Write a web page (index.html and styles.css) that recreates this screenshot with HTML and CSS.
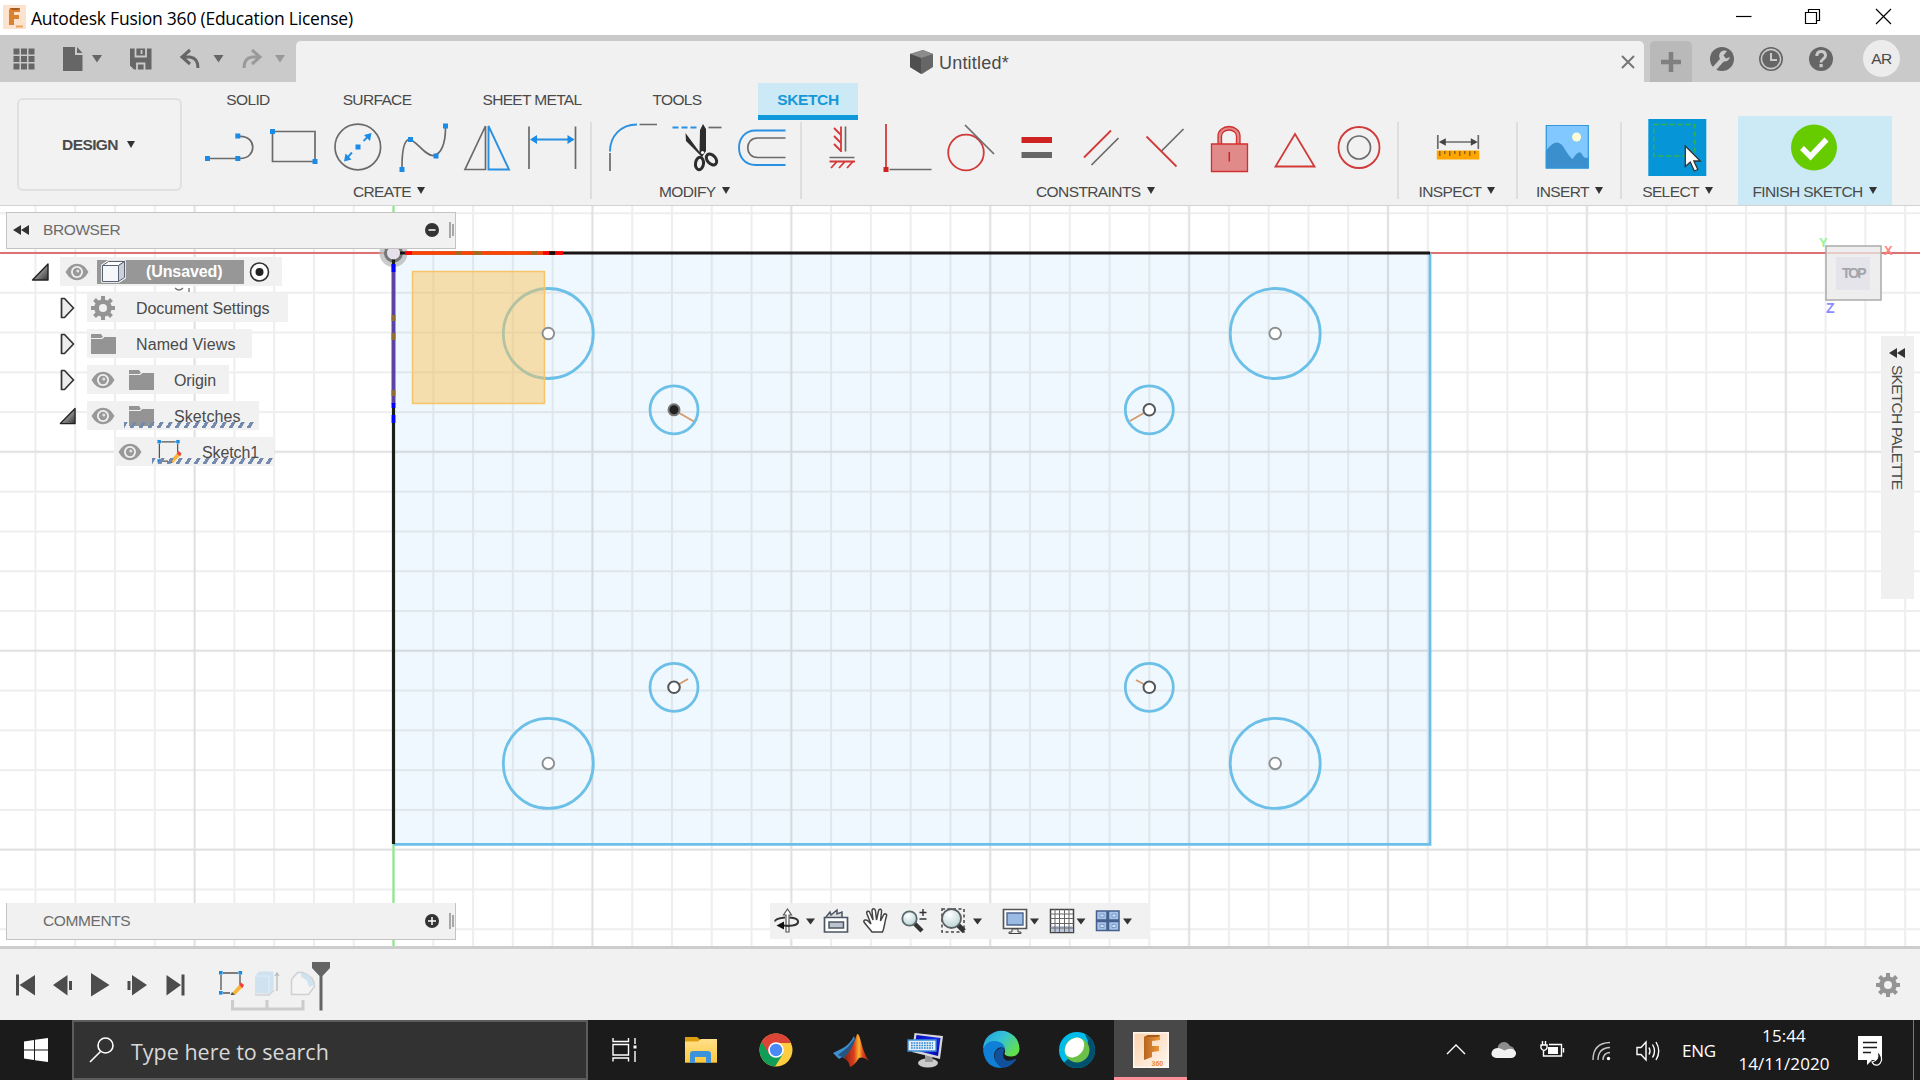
FILE: index.html
```html
<!DOCTYPE html>
<html lang="en">
<head>
<meta charset="utf-8">
<title>Autodesk Fusion 360 (Education License)</title>
<link rel="stylesheet" href="styles.css">
</head>
<body>
<svg class="defs" width="0" height="0">
  <defs>
    <linearGradient id="steel" x1="0" y1="0" x2="1" y2="1"><stop offset="0" stop-color="#eee"/><stop offset="1" stop-color="#333"/></linearGradient>
    <linearGradient id="folderGold" x1="0" y1="0" x2="0" y2="1"><stop offset="0" stop-color="#ffe08a"/><stop offset="1" stop-color="#ffc83d"/></linearGradient>
    <linearGradient id="matlab" x1="0" y1="0" x2="1" y2="0"><stop offset="0" stop-color="#8c1c12"/><stop offset=".4" stop-color="#d9401e"/><stop offset=".6" stop-color="#ffb52e"/><stop offset=".75" stop-color="#e0481f"/><stop offset="1" stop-color="#8c1c12"/></linearGradient>
    <linearGradient id="edgeTop" x1="0" y1="0" x2="1" y2=".6"><stop offset="0" stop-color="#1f9fe0"/><stop offset=".5" stop-color="#35c1d8"/><stop offset="1" stop-color="#62e04c"/></linearGradient>
    <linearGradient id="blueScreen" x1="0" y1="0" x2="1" y2="1"><stop offset="0" stop-color="#0008b8"/><stop offset=".5" stop-color="#1a2ae8"/><stop offset="1" stop-color="#0000a0"/></linearGradient>
    <linearGradient id="bronze" x1="0" y1="0" x2="1" y2="0"><stop offset="0" stop-color="#b5651f"/><stop offset="1" stop-color="#ef9a3c"/></linearGradient>
    <linearGradient id="peach" x1="0" y1="0" x2="1" y2="1"><stop offset="0" stop-color="#fbd2ad"/><stop offset="1" stop-color="#fff6ee"/></linearGradient>
    <radialGradient id="lens" cx=".4" cy=".3" r=".8"><stop offset="0" stop-color="#fff"/><stop offset="1" stop-color="#b4d0d0"/></radialGradient>
    <symbol id="eye" viewBox="0 0 24 18"><path d="M0.5 9Q5 .8 12 .8T23.500 9Q19 17.200 12 17.200T.5 9Z" fill="#999"/><circle cx="12" cy="9" r="6" fill="#f1f1f1"/><circle cx="12" cy="9" r="4.200" fill="#999"/><circle cx="12.800" cy="8" r="1.500" fill="#e4e4e4"/></symbol>
    <symbol id="folder" viewBox="0 0 25 21"><path d="M0 1h10l2 3h13v17H0Z" fill="#949494"/><path d="M0 5.500h11l2-2" stroke="#f1f1f1" fill="none" stroke-width="1.200"/></symbol>
    <symbol id="gear" viewBox="-12 -12 24 24"><circle r="6.300" fill="none" stroke="#949494" stroke-width="5"/><g fill="#949494"><rect x="-2" y="-12" width="4" height="24"/><rect x="-12" y="-2" width="24" height="4"/><rect x="-2" y="-12" width="4" height="24" transform="rotate(45)"/><rect x="-12" y="-2" width="24" height="4" transform="rotate(45)"/></g><circle r="4" fill="#f1f1f1"/></symbol>
    <symbol id="closed" viewBox="0 0 15 22"><path d="M1.500 1.500H4.500L13.500 11L4.500 20.500H1.500Z" fill="#ececec" stroke="#333" stroke-width="1.700" stroke-linejoin="round"/></symbol>
    <symbol id="open" viewBox="0 0 18 18"><path d="M17 1V17H1.500Z" fill="url(#steel)" stroke="#222" stroke-width="1.400" stroke-linejoin="round"/></symbol>
    <symbol id="rewind" viewBox="0 0 16 10"><path d="M8 0V10L0 5ZM16 0V10L8 5Z" fill="#333"/></symbol>
    <symbol id="sketch" viewBox="0 0 26 26"><path d="M5 3H20M3 5V20M22 5V14M5 23H12" stroke="#555" stroke-width="1.300" fill="none"/><g fill="#1b8be0"><rect x="1" y="1" width="3.600" height="3.600"/><rect x="20.500" y="1" width="3.600" height="3.600"/><rect x="1" y="21" width="3.600" height="3.600"/></g><path d="M14 23l8-9 3 3-8 8Z" fill="#f8b53c"/><path d="M21 15l2-2.500 3 2.500-1.500 3Z" fill="#f2413d"/><path d="M12.500 25l1.500-3 3 3Z" fill="#555"/></symbol>
  </defs>
</svg>

<header class="titlebar">
  <svg class="app-logo" width="23" height="24" viewBox="0 0 23 24"><rect width="23" height="24" fill="#fbe3cf"/><path d="M7 3H17V7H11V10H16V14H11V20H6V5Z" fill="#d9822f"/><path d="M7 3H17L15 5H9Z" fill="#a85a1c"/><path d="M13 21.500h7" stroke="#e9a464" stroke-width="2"/></svg>
  <span class="title">Autodesk Fusion 360 (Education License)</span>
  <svg class="window-buttons" width="160" height="20" viewBox="1733 7 160 20" fill="none" stroke="#000" stroke-width="1.200"><path d="M1736 16.500h15.500"/><path d="M1805.500 12.500h11v11h-11zM1808.500 12.500v-3h11v11h-3"/><path d="M1876 9l15 15M1891 9l-15 15"/></svg>
</header>

<div class="tabstrip">
  <div class="quick">
    <svg width="296" height="47" viewBox="0 35 296 47">
      <g fill="#666"><path d="M13.500 48.500h6v6h-6zM21 48.500h6v6h-6zM28.500 48.500h6v6h-6zM13.500 56h6v6h-6zM21 56h6v6h-6zM28.500 56h6v6h-6zM13.500 63.500h6v6h-6zM21 63.500h6v6h-6zM28.500 63.500h6v6h-6z"/><path d="M63 47H75V55H82.500V71H63ZM77 47L82.500 53H77Z"/><path d="M92 55h10l-5 7.500Z"/><path d="M130 48.500h21.500V69.500H134L130 65.500Z"/><path d="M213.500 55h10l-5 7.500Z"/></g>
      <path d="M135.500 48v8.500h10.500v-8.500M137 70v-6.500h7.500v6.500M141.500 50v4" stroke="#cacaca" stroke-width="1.800" fill="none"/>
      <path d="M190 50l-8 7 8 7M183 57h7q8 1 8 11" fill="none" stroke="#666" stroke-width="3"/>
      <path d="M252 50l8 7-8 7M259 57h-7q-8 1-8 11" fill="none" stroke="#999" stroke-width="3"/><path d="M275 55h10l-5 7.500Z" fill="#999"/>
    </svg>
  </div>
  <div class="doc-tab">
    <svg width="25" height="26" viewBox="0 0 25 26"><path d="M1 5L14 1L24 5V18L13 25L1 18Z" fill="#666"/><path d="M1 5L12 9L24 5L14 1Z" fill="#8b8b8b"/><path d="M12 9V25L1 18V5Z" fill="#4f4f4f"/></svg>
    <span>Untitled*</span>
    <svg class="doc-close" width="14" height="14" viewBox="0 0 14 14"><path d="M1 1l12 12M13 1L1 13" stroke="#777" stroke-width="2"/></svg>
  </div>
  <div class="add-tab"><svg width="20" height="20"><path d="M10 0V20M0 10H20" stroke="#808080" stroke-width="4.500"/></svg></div>
  <svg class="tools" width="150" height="26" viewBox="1708 46 150 26"><circle cx="1722" cy="59" r="12" fill="#666"/><path d="M1714 69l8.500-9.500" stroke="#cacaca" stroke-width="4.500"/><path d="M1727 51a5.500 5.500 0 1 0 3 6l-4 1.500-2.500-3Z" fill="#cacaca"/><circle cx="1771" cy="59" r="11.200" fill="none" stroke="#666" stroke-width="1.600"/><circle cx="1771" cy="59" r="8.800" fill="#666"/><path d="M1771 53v7h6" fill="none" stroke="#cacaca" stroke-width="2"/><circle cx="1821" cy="59" r="12" fill="#666"/><path d="M1816.800 56q.2-4.500 4.400-4.500t4.300 4q0 2-2.400 3.600-2.100 1.500-2.100 3.400" fill="none" stroke="#cacaca" stroke-width="3"/><rect x="1819.500" y="64" width="3.200" height="3.200" fill="#cacaca"/></svg>
  <div class="avatar">AR</div>
</div>

<section class="ribbon">
  <button class="design">DESIGN<i class="caret"></i></button>
  <div class="ribbon-main">
    <nav class="tabs"><span>SOLID</span><span>SURFACE</span><span>SHEET METAL</span><span>TOOLS</span><span class="active">SKETCH</span></nav>
    <div class="groups">
      <div class="group create">
        <div class="icons">
          <svg viewBox="198 116 64.500 62"><path d="M210 158.500H236M240 136.300C257 136 257 158.500 240 158.500" class="g"/><path d="M205 156h5v5h-5zM235.300 156h5v5h-5zM235.300 133.500h5v5h-5z" class="b"/></svg>
          <svg viewBox="262.500 116 64.500 62"><path d="M272 131.500h42.500v30H272z" class="g"/><path d="M269.500 129h5v5h-5zM312 159h5v5h-5z" class="b"/></svg>
          <svg viewBox="327 116 64.500 62"><circle cx="357.800" cy="147" r="22.800" class="g"/><path d="M346 159l6-6.500M363.500 141l6-6" class="bl"/><path d="M344 161.500l1.500-8 6 6zM371.500 133l-1.500 8-6-6zM355.500 144.500h5v5h-5z" class="b"/></svg>
          <svg viewBox="391.500 116 64.500 62"><path d="M401.500 167C401.500 149 404 141 408 139.500C414 138 425 157 433 155.500C441 154 445 143 445 128" class="g"/><path d="M399 167h5v5h-5zM407.500 137h5v5h-5zM433 153.500h5v5h-5zM442.500 123.500h5v5h-5z" class="b"/></svg>
          <svg viewBox="456 116 64.500 62"><path d="M485.500 126V169.500H465Z" class="g"/><path d="M488.500 126L509 169.500H488.500Z" class="bl"/></svg>
          <svg viewBox="521 116 64.500 62"><path d="M529 126.500v42.500M575.500 126.500v42.500" class="g"/><path d="M532 139.500h41" class="bl"/><path d="M530 139.500l7-4.500v9zM574.500 139.500l-7-4.500v9z" class="b"/></svg>
        </div>
        <div class="label">CREATE<i class="caret"></i></div>
      </div>
      <div class="group modify">
        <div class="icons">
          <svg viewBox="600 116 64.500 62"><path d="M610 153V171M639.500 124.500H657" class="g"/><path d="M610 151.500C610 136 621 124.500 637 124.500" class="bl"/></svg>
          <svg viewBox="665.500 116 64.500 62"><path d="M673 127.500h25" class="bl" stroke-dasharray="6 3"/><path d="M709 127.500h13" class="g"/><path d="M686 133l14 19 .5-22 3-6 3 5v22l-4 6-16-16Z" fill="#2d2d2d"/><ellipse cx="700" cy="163.500" rx="4" ry="6.200" transform="rotate(8 700 163.500)" fill="none" stroke="#2d2d2d" stroke-width="3"/><ellipse cx="712" cy="159.500" rx="4.200" ry="6.200" transform="rotate(-42 712 159.500)" fill="none" stroke="#2d2d2d" stroke-width="3"/><circle cx="703" cy="152.500" r="1.600" fill="#fff"/></svg>
          <svg viewBox="729.500 116 64.500 62"><path d="M786 130.500H756C734 130.500 734 165 756 165H786" class="bl"/><path d="M786 138H758C745 138 745 157.500 758 157.500H786" class="g"/></svg>
        </div>
        <div class="label">MODIFY<i class="caret"></i></div>
      </div>
      <div class="group constraints">
        <div class="icons">
          <svg viewBox="810 116 64.500 62"><path d="M845.500 126.500v25M829.500 157.500h25" class="g"/><path d="M841 126.500v25.500M829.500 161.500H855M834 128l7 7M834 136l7 7M834 144l7 7M831 168l6-6.500M839 168l6-6.500M847 168l6-6.500" class="r"/></svg>
          <svg viewBox="874.500 116 64.500 62"><path d="M889 169.500h42" class="g"/><path d="M885.500 124v43" class="r"/><path d="M883 167h5v5h-5z" fill="#cf2222"/></svg>
          <svg viewBox="939 116 64.500 62"><circle cx="966" cy="152.500" r="17.800" class="r"/><path d="M965 125l29 29" class="g"/></svg>
          <svg viewBox="1003.500 116 64.500 62"><path d="M1021 137h30.500v6h-30.500z" fill="#cf2222"/><path d="M1021 152h30.500v6h-30.500z" fill="#666"/></svg>
          <svg viewBox="1068 116 64.500 62"><path d="M1084 157.500l27-27" class="r"/><path d="M1091.500 165l27-27" class="g"/></svg>
          <svg viewBox="1133.500 116 64.500 62"><path d="M1162 151l22-22" class="g"/><path d="M1147 136.500l30 30" class="r"/></svg>
          <svg viewBox="1197 116 64.500 62"><path d="M1218 144v-8a11 9.500 0 0 1 22 0v8h-3.500v-8a7.500 6 0 0 0-15 0v8zM1211.500 144h36v27.500h-36z" fill="#e08a8a" stroke="#d23030" stroke-width="1.300"/><path d="M1229.300 152v9.500" stroke="#cf2222" stroke-width="1.500"/></svg>
          <svg viewBox="1261.500 116 64.500 62"><path d="M1294.500 134L1314 166.500H1275Z" class="r"/></svg>
          <svg viewBox="1326 116 64.500 62"><circle cx="1359" cy="147.500" r="20.500" class="r"/><circle cx="1359" cy="147.500" r="11.500" class="g"/></svg>
        </div>
        <div class="label">CONSTRAINTS<i class="caret"></i></div>
      </div>
      <div class="group inspect">
        <div class="icons"><svg viewBox="1425.200 116 64.500 62"><path d="M1438 135v14M1478.500 135v14M1441 142h35" class="g"/><path d="M1439 142l7-3.800v7.600zM1478 142l-7-3.800v7.600z" fill="#444"/><path d="M1437 150.500h42.500v9H1437z" fill="#fea500"/><path d="M1440 151v5M1445 151v3M1450 151v5M1455 151v3M1460 151v5M1465 151v3M1470 151v5M1475 151v3" stroke="#6d5520" stroke-width="1.200"/></svg></div>
        <div class="label">INSPECT<i class="caret"></i></div>
      </div>
      <div class="group insert">
        <div class="icons"><svg viewBox="1536.200 116 64.500 62"><path d="M1547 125h43v43.500h-43z" fill="#80c8ff"/><path d="M1547 151q10-14 17-5 7 12 10 13 6-10 9-5 3 6 7 3v11.500h-43z" fill="#3b8fcc"/><circle cx="1577.800" cy="137" r="4.500" fill="#fffbd6"/><path d="M1547.500 125.500h42v42.500h-42z" fill="none" stroke="#3397dc" stroke-width="1.200"/></svg></div>
        <div class="label">INSERT<i class="caret"></i></div>
      </div>
      <div class="group select">
        <div class="icons"><svg viewBox="1644.700 116 64.500 62"><path d="M1648 119h58v57h-58z" fill="#0696d7"/><path d="M1653.500 124.500h41v31.500h-41z" fill="none" stroke="#32b44a" stroke-width="1.400" stroke-dasharray="5 3"/><path d="M1685 146v20.500l5-4.500 4 9 3.500-1.500-4-8.500h6.500z" fill="#fff" stroke="#333" stroke-width="1.300"/></svg></div>
        <div class="label">SELECT<i class="caret"></i></div>
      </div>
      <div class="group finish">
        <div class="icons"><svg viewBox="1781.500 116 64.500 62"><circle cx="1813.500" cy="147.500" r="23" fill="#66cc00"/><path d="M1801.500 148l8.500 8.500 16-17" fill="none" stroke="#fff" stroke-width="5.500"/></svg></div>
        <div class="label">FINISH SKETCH<i class="caret"></i></div>
      </div>
    </div>
  </div>
</section>

<main class="canvas">
  <svg class="drawing" width="1920" height="740" viewBox="0 206 1920 740">
    <defs>
      <pattern id="minor" x="373.600" y="233.100" width="39.780" height="39.780" patternUnits="userSpaceOnUse"><path d="M19.900 0V39.800M0 19.900H39.800" stroke="#000" stroke-opacity=".065" stroke-width="2"/></pattern>
      <pattern id="major" x="294" y="153.400" width="198.900" height="198.900" patternUnits="userSpaceOnUse"><path d="M99.500 0V199M0 99.500H199" stroke="#000" stroke-opacity=".06" stroke-width="2"/></pattern>
    </defs>
    <path d="M393.500 253H1430V844H393.500Z" fill="#eff8fe"/>
    <path d="M0 206H1920V946H0Z" fill="url(#minor)"/>
    <path d="M0 206H1920V946H0Z" fill="url(#major)"/>
    <path d="M0 253H393M1430 253H1920" stroke="#dc7373" stroke-width="2.200"/>
    <path d="M393.500 206V250M393.500 844V946" stroke="#7fef7f" stroke-width="2"/>
    <path d="M1430 253V844.300H393.500" fill="none" stroke="#6cc0e8" stroke-width="2.800"/>
    <g fill="none" stroke="#6cc0e8" stroke-width="2.800"><circle cx="548.300" cy="333.500" r="45"/><circle cx="1275.200" cy="333.500" r="45"/><circle cx="548.300" cy="763.400" r="45"/><circle cx="1275.200" cy="763.400" r="45"/><circle cx="674" cy="409.800" r="24"/><circle cx="1149.300" cy="409.800" r="24"/><circle cx="674" cy="687.300" r="24"/><circle cx="1149.300" cy="687.300" r="24"/></g>
    <path d="M412.500 271.500h132v132h-132z" fill="#fac45c" fill-opacity=".5" stroke="#f8c46a" stroke-width="1.500"/>
    <path d="M674 410l20 11.500M1149 410l-19 11M674 687l14-8M1149 687l-13-7" stroke="#d49a6c" stroke-width="1.800"/>
    <g fill="#fff" stroke="#8a8f92" stroke-width="1.900"><circle cx="548.300" cy="333.500" r="5.800"/><circle cx="1275.200" cy="333.500" r="5.800"/><circle cx="548.300" cy="763.400" r="5.800"/><circle cx="1275.200" cy="763.400" r="5.800"/><g stroke="#55585a" stroke-width="2"><circle cx="1149.300" cy="409.800" r="5.800"/><circle cx="674" cy="687.300" r="5.800"/><circle cx="1149.300" cy="687.300" r="5.800"/></g></g>
    <circle cx="674" cy="409.800" r="5.500" fill="#222" stroke="#777" stroke-width="2"/>
    <circle cx="393.500" cy="253" r="14" fill="#b5b5b5" fill-opacity=".7"/><circle cx="393.500" cy="253" r="9.500" fill="#777"/>
    <path d="M393.500 253H1430" stroke="#1a1414" stroke-width="3.200"/><path d="M393.500 253V844" stroke="#182018" stroke-width="3.200"/>
    <path d="M405 253h158" stroke="#ff4500" stroke-width="3.600"/><path d="M455 253h7M474 253h7M531 253h6" stroke="#9a6d20" stroke-width="3.600"/><path d="M405 253h7M543 253h20" stroke="#f00" stroke-width="3.600"/><path d="M549 253h6" stroke="#111" stroke-width="3.600"/>
    <path d="M393.500 264V404" stroke="#5b43a5" stroke-width="3.800"/><path d="M393.500 315v6M393.500 333v7M393.500 390v6" stroke="#8d6d35" stroke-width="3.800"/><path d="M393.500 264v8M393.500 403v5M393.500 415v8" stroke="#00f" stroke-width="3.800"/>
    <circle cx="393.500" cy="253" r="6.500" fill="#e6e0ea"/>
  </svg>

  <aside class="browser">
    <div class="panel-head browser-head"><svg width="16" height="10"><use href="#rewind"/></svg><span>BROWSER</span><svg class="knob" width="28" height="20" viewBox="0 0 28 20"><circle cx="7" cy="10" r="7" fill="#333"/><path d="M3.500 10h7" stroke="#fff" stroke-width="1.500"/><path d="M25 2v16" stroke="#777" stroke-width="1.200"/><path d="M28 4v12" stroke="#777" stroke-width="1.200"/></svg></div>
    <div class="tree">
      <div class="row r1"><svg width="18" height="18"><use href="#open"/></svg>
        <div class="cell root"><svg width="24" height="18"><use href="#eye"/></svg>
          <span class="chip"><svg width="25" height="23" viewBox="0 0 25 23"><path d="M1 5L7 1H24V18L18 22H1Z" fill="#e4e7ec" stroke="#fff" stroke-width="1.500"/><path d="M1.500 5.500H17.500V21.500H1.500Z" fill="#f6f7f9" stroke="#596272" stroke-width="1"/><path d="M1.500 5.500L7.500 1.500H23.500L17.500 5.500Z" fill="#fff" stroke="#596272"/><path d="M17.500 5.500L23.500 1.500V17.500L17.500 21.500Z" fill="#cbd0da" stroke="#596272"/></svg><b>(Unsaved)</b></span>
          <svg class="radio" width="21" height="22" viewBox="-10.500 -11 21 22"><circle r="9" fill="#fff" stroke="#333" stroke-width="1.600"/><circle r="4" fill="#222"/></svg></div></div>
      <div class="row r2"><svg width="15" height="22"><use href="#closed"/></svg><div class="cell w1"><svg width="24" height="24"><use href="#gear"/></svg><span>Document Settings</span></div></div>
      <div class="row r2"><svg width="15" height="22"><use href="#closed"/></svg><div class="cell w2"><svg width="25" height="21"><use href="#folder"/></svg><span>Named Views</span></div></div>
      <div class="row r2"><svg width="15" height="22"><use href="#closed"/></svg><div class="cell w3"><svg width="24" height="18"><use href="#eye"/></svg><svg width="25" height="21"><use href="#folder"/></svg><span>Origin</span></div></div>
      <div class="row r2"><svg width="17" height="18"><use href="#open"/></svg><div class="cell w4"><svg width="24" height="18"><use href="#eye"/></svg><svg width="25" height="21"><use href="#folder"/></svg><span>Sketches</span><i class="hatch"></i></div></div>
      <div class="row r3"><div class="cell w5"><svg width="24" height="18"><use href="#eye"/></svg><svg width="26" height="25"><use href="#sketch"/></svg><span>Sketch1</span><i class="hatch"></i></div></div>
    </div>
    <svg class="sliver" width="20" height="5" viewBox="0 0 20 5"><path d="M1 0q4 4 8 0M15 0v4" fill="none" stroke="#777" stroke-width="1.400"/></svg>
  </aside>

  <div class="cube">
    <svg width="80" height="90" viewBox="1815 232 80 90"><path d="M1826 246h55v54h-55z" fill="#ececec" fill-opacity=".9" stroke="#aaa" stroke-width="1.500"/><path d="M1827 253h53" stroke="#e6c4c4" stroke-width="1.500"/><path d="M1836 257h34v33h-34z" fill="#e4e4ea"/></svg>
    <span class="top">TOP</span><span class="ax x">X</span><span class="ax y">Y</span><span class="ax z">Z</span>
  </div>

  <aside class="palette"><svg width="16" height="10"><use href="#rewind"/></svg><span>SKETCH PALETTE</span></aside>

  <div class="panel-head comments"><span>COMMENTS</span><svg class="knob" width="28" height="20" viewBox="0 0 28 20"><circle cx="7" cy="10" r="7" fill="#333"/><path d="M3 10h8M7 6v8" stroke="#fff" stroke-width="1.500"/><path d="M25 2v16" stroke="#777" stroke-width="1.200"/><path d="M28 4v12" stroke="#777" stroke-width="1.200"/></svg></div>

  <div class="navbar">
    <svg width="379" height="36" viewBox="770 903 379 36">
      <g fill="#333"><path d="M806 918.500h9l-4.500 6zM973 918.500h9l-4.500 6zM1030 918.500h9l-4.500 6zM1076.500 918.500h9l-4.500 6zM1123 918.500h9l-4.500 6z"/></g>
      <path d="M786 915v17h3v-17h2.500l-4-6-4 6z" fill="#fff" stroke="#555" stroke-width="1.200"/><path d="M785 917.500c-6 .5-10 2-10 4M789.500 917.500c12 1 10 7 3 8-3 .5-6 .5-9 0" fill="none" stroke="#333" stroke-width="2"/><path d="M784 921.500v8l-7.500-4z" fill="#111"/>
      <path d="M826 917l4-5 1 3 6-5v4l5-2v5" fill="#ddd" stroke="#4b5563" stroke-width="1.500"/><path d="M824.500 917.500h23v14.500h-23z" fill="#fff" stroke="#4b5563" stroke-width="1.700"/><path d="M829 922h14.500v6H829z" fill="#bcc2ce" stroke="#4b5563" stroke-width="1.500"/>
      <path d="M872 932c-3-4-6-7-8-10-1-2 2-3 4-1l3 3-4-10c-1-3 2-4 3-1l3 7-1-9c0-3 3-3 3.500 0l1 9 2-9c1-3 3.500-2 3 1l-1 9 3-6c1-2 4-1 3 1-2 6-2 12-4 16z" fill="#fff" stroke="#444" stroke-width="1.500"/>
      <path d="M914 923l8 8" stroke="#333" stroke-width="4.500"/><circle cx="909.500" cy="918.500" r="7.200" fill="url(#lens)" stroke="#5a6870" stroke-width="1.800"/><path d="M923 909v7M919.500 912.500h7M919.500 919h7" stroke="#333" stroke-width="1.400"/>
      <path d="M942 909h22v23h-22z" fill="none" stroke="#444" stroke-width="1.500" stroke-dasharray="3 2.500"/><path d="M957 924l7 7" stroke="#333" stroke-width="5"/><circle cx="951.500" cy="918.500" r="9.500" fill="url(#lens)" stroke="#5a6062" stroke-width="1.800"/>
      <path d="M1003.500 909.500h23v19h-23z" fill="#fff" stroke="#555" stroke-width="1.700"/><path d="M1007 913h16v12h-16z" fill="#9bbbe4" stroke="#4d6690" stroke-width="1.400"/><path d="M1012 929h6v3h3v1.500h-12V932h3z" fill="#eee" stroke="#444" stroke-width="1"/>
      <path d="M1050.500 909.500h23v23h-23z" fill="#fff" stroke="#444" stroke-width="1.500"/><path d="M1051 926h22v6h-22z" fill="#b9c6dc"/><path d="M1055 909v23M1059.500 909v23M1064.500 909v23M1069 909v23M1050 914h23M1050 918.500h23M1050 923.500h23M1050 928h23" stroke="#666" stroke-width="1"/>
      <path d="M1096.500 911h10.500v9h-10.500zM1108.500 911h10.500v9h-10.500zM1096.500 921.500h10.500v9h-10.500zM1108.500 921.500h10.500v9h-10.500z" fill="#a6c2e6" stroke="#465f8c" stroke-width="1.500"/><path d="M1100 914h4v3h-4zM1112 914h4v3h-4zM1100 924.500h4v3h-4zM1112 924.500h4v3h-4z" fill="#cfe0f5" stroke="#6c8fc4" stroke-width=".8"/>
    </svg>
  </div>
</main>

<footer class="timeline">
  <svg width="350" height="60" viewBox="0 955 350 60">
    <g fill="#4c4c4c"><path d="M16 974.500h3v21h-3zM35 975v20.500l-15.500-10.500zM67.500 975v20.500L53 985zM69 981h3v9h-3zM91 973v23.500l18.500-11.500zM127.500 981h3v9h-3zM132 975v20.500l15-10.500zM166.500 975v20.500l14.500-10.500zM181.500 974.500h3v21h-3z"/></g>
    <use href="#sketch" x="218" y="970" width="26" height="26"/>
    <path d="M255 976l4-4.500h14.500v17l-4 5H255z" fill="#cfe2f0"/><path d="M255 976h14v17" fill="none" stroke="#e0ecf6" stroke-width="1.200"/><path d="M255 995h14l5-5" fill="none" stroke="#d3d3d3" stroke-width="1.500"/><path d="M277 991v-17M275 976l2-3 2 3" fill="none" stroke="#bbb" stroke-width="1.300"/>
    <path d="M291.500 994.500v-15l6-7h5q12 4 12 14l-6 8z" fill="#f4f4f4" stroke="#d0d0d0" stroke-width="1.500"/><path d="M301 973q10 0 13 12l-5 2q-1-8-8-10z" fill="#cfe2f0"/>
    <path d="M232.500 1000v9H303v-9M267 1000v9" fill="none" stroke="#ccc" stroke-width="3"/>
    <path d="M312 962h18v6l-7.500 8v34.500h-3V976L312 968z" fill="#646464"/>
  </svg>
  <svg class="tl-gear" width="24" height="24"><use href="#gear"/></svg>
</footer>

<footer class="taskbar">
  <div class="start"><svg width="24" height="24"><path d="M0 3.500L10 2V11.500H0ZM11 1.800L24 0V11.500H11ZM0 12.500H10V22L0 20.500ZM11 12.500H24V24L11 22.200Z" fill="#fff"/></svg></div>
  <div class="search"><svg width="26" height="26" viewBox="0 0 26 26"><circle cx="15.500" cy="8.500" r="7.500" fill="none" stroke="#fff" stroke-width="1.600"/><path d="M10.500 14.500L0 25" stroke="#fff" stroke-width="1.600"/></svg><span>Type here to search</span></div>
  <div class="apps">
    <div class="app"><svg width="28" height="24" viewBox="609 1038 28 24" fill="none" stroke="#fff" stroke-width="1.400"><path d="M612 1038v3.500h15.500V1038M612 1061.500v-3.500h15.500v3.500M612 1044.500h15.500v10.500H612zM634 1038v6M634 1051v11"/><path d="M632.500 1045.500h3v3h-3z" fill="#fff" stroke="none"/></svg></div>
    <div class="app"><svg width="34" height="28" viewBox="684 1036 34 28"><path d="M685 1037h12l3 2.500h17v23h-32z" fill="#dd9f12"/><path d="M685 1041.500h13l3-2.500h16v23.500h-32z" fill="url(#folderGold)"/><path d="M690 1063v-9q0-3 3-3h15q3 0 3 3v9h-5v-6h-11v6z" fill="#3c93d9"/></svg></div>
    <div class="app"><svg width="34" height="34" viewBox="-17 -17 34 34"><circle r="16.500" fill="#ffcd40"/><path d="M-14.300-8.200A16.500 16.500 0 0 0-1 16.500L7 4 0 0Z" fill="#0f9d58"/><path d="M-14.300-8.200A16.500 16.500 0 0 1 15-7H0L-7 4Z" fill="#db4437"/><circle r="7.800" fill="#fff"/><circle r="6.200" fill="#4a8af4"/></svg></div>
    <div class="app"><svg width="36" height="34" viewBox="0 0 36 34"><path d="M0 20l10-5q7-4 11-12l3 12-11 11-4-2-3 2z" fill="#3f8fd0"/><path d="M5 22l10-8 8-10-4 16-8 5z" fill="#23557f"/><path d="M24 1q2-1 4 8 3 12 8 19-6-5-10-3-5 8-9 9-1-6-6-9Q20 16 24 1Z" fill="url(#matlab)"/></svg></div>
    <div class="app"><svg width="36" height="36" viewBox="0 0 36 36"><ellipse cx="20" cy="31" rx="10" ry="4.500" fill="#ccc"/><path d="M17 23h7l1 7h-8z" fill="#999"/><path d="M6.500 1L35 4l-3 23L4 20z" fill="#d6d6d6"/><path d="M8.500 3L32.500 6l-2.500 18L6 18z" fill="url(#blueScreen)"/><path d="M0 8h28v11H0z" fill="#e8f1fb" stroke="#3d8ed5" stroke-width="1.300"/><path d="M3 11h22M3 13.500h22M3 16h22" stroke="#2d83d0" stroke-width="1.300" stroke-dasharray="1.700 .9"/></svg></div>
    <div class="app"><svg width="37" height="36" viewBox="0 0 37 36"><path d="M0 17A18 18 0 0 1 36.500 17Q36 24 28 24.500 20 24 22 20 23 14 16 11 8 8 0 17Z" fill="url(#edgeTop)"/><path d="M0 18Q3 8 13 9q8 1 9 8-5-4-9 1-6 8 6 18Q2 36 0 18Z" fill="#0f7fd8"/><path d="M22 17q-5-3-9 2-5 9 6 17 9-1 14-8 1-2-1-1-11 5-12-4 0-3 2-6Z" fill="#11509a"/></svg></div>
    <div class="app"><svg width="36" height="36" viewBox="-18 -18 36 36"><circle r="18" fill="#00bceb"/><path d="M8-16.100A18 18 0 1 1-13 12.400L-8 8Q10 6 11-9Z" fill="#00506e"/><circle r="12.500" fill="#6cc04a"/><ellipse cx="-2.500" cy="-2.500" rx="8.500" ry="11" transform="rotate(42 -2.500 -2.500)" fill="#fff"/></svg></div>
    <div class="app current"><svg width="36" height="36" viewBox="0 0 36 36"><rect width="36" height="36" fill="#fff8f0"/><rect x="1.500" y="1.500" width="33" height="33" fill="url(#peach)"/><path d="M11 5l4-2h12v5l-8 1v5h7v5l-7 1v5l-8 3z" fill="url(#bronze)"/><path d="M11 5l4-2h12l-2 2H14z" fill="#a55a1a"/><text x="18.500" y="33.500" font-family="Liberation Sans, sans-serif" font-size="7" font-weight="700" fill="#f08a24">360</text></svg></div>
  </div>
  <svg class="tray-icons" width="216" height="24" viewBox="1446 1038 216 24" fill="none" stroke="#fff" stroke-width="1.400">
    <path d="M1447 1054l9-9 9 9"/>
    <path d="M1498 1051a6.500 6.500 0 0 1 12-5q5 1 5 7l-12 1z" fill="#8c8c8c" stroke="none"/><path d="M1496 1058q-5-1-4.500-5 1-5 7-5 2 0 6 2.500 4-2.500 8-1.500 4 2 3.500 5-1 4-5 4z" fill="#f2f2f2" stroke="none"/>
    <path d="M1549 1044.500h12.500v11.500h-18v-6M1563.500 1048v4.500M1541 1045h6v3q-1 2.500-3 2.500t-3-2.500zM1542.500 1041v4M1545.500 1041v4"/><path d="M1548 1047h10v7h-10z" fill="#fff" stroke="none"/>
    <path d="M1593 1060q0-17 17-17.500M1598 1060q0-12 12-12.500M1603 1060q0-7 7-7.500" opacity=".75"/><circle cx="1608.500" cy="1058.500" r="1.700" fill="#fff" stroke="none"/>
    <path d="M1637 1047.500h4l5-5.500v18l-5-5.500h-4zM1649 1047.500q2 3.500 0 7M1652.500 1044.500q4 6.500 0 13M1656 1042q5.500 9 0 18"/>
  </svg>
  <span class="lang">ENG</span>
  <div class="clock"><span>15:44</span><span>14/11/2020</span></div>
  <svg class="notify" width="25" height="32" viewBox="0 0 25 32"><path d="M0 0h24v24H14l-5 5v-5H0z" fill="#fff"/><path d="M5 6.500h14M5 11.500h14M5 16.500h8" stroke="#1b1b1b" stroke-width="1.500"/><path d="M19 16q3 8-5 10 2 4 6 3 5-3 3-9-1-3-4-4Z" fill="#1b1b1b" stroke="#fff" stroke-width="1.200"/></svg>
  <div class="peek"></div>
</footer>
</body>
</html>
```
FILE: styles.css
```css
* { box-sizing: border-box; }
body { margin: 0; width: 1920px; height: 1080px; overflow: hidden; display: flex; flex-direction: column; background: #fff; color: #4a4a4a; font: 15.500px "Liberation Sans", Arial, sans-serif; }
svg { display: block; flex: none; overflow: visible; }
.defs { position: absolute; }
.caret { display: inline-block; width: 0; height: 0; border: 4.500px solid transparent; border-top: 7.500px solid #333; border-bottom: 0; margin-left: 6px; vertical-align: 3px; }

.titlebar { height: 35px; flex: none; display: flex; align-items: center; padding: 0 27px 0 3px; background: #fff; color: #000; }
.app-logo { margin-top: -2px; }
.title { margin: 0 0 0 5px; font: 17.500px "Open Sans", "Noto Sans", sans-serif; letter-spacing: -0.230px; }
.window-buttons { margin: -2px 0 0 auto; }

.tabstrip { height: 47px; flex: none; display: flex; align-items: flex-end; background: #cacaca; }
.quick { width: 296px; }
.doc-tab { width: 1348px; height: 41px; display: flex; align-items: center; padding: 0 9px 0 613px; background: #f1f1f1; border-radius: 5px 5px 0 0; font-size: 18px; gap: 5px; letter-spacing: .2px; }
.doc-tab span { padding-top: 3px; }
.doc-close { margin-left: auto; }
.add-tab { width: 42px; height: 41px; margin-left: 6px; display: flex; align-items: center; justify-content: center; background: #b9b9b9; border-radius: 5px 5px 0 0; }
.tools { margin: 0 0 10px 16px; }
.avatar { width: 37px; height: 37px; margin: 0 0 5px 5px; border-radius: 50%; background: #ececec; display: flex; align-items: center; justify-content: center; letter-spacing: -.5px; }

.ribbon { height: 124px; flex: none; display: flex; background: #f1f1f1; border-bottom: 1.500px solid #d2d2d2; }
.design { width: 165px; height: 93px; margin: 16px 16px 0 17px; padding: 0 8px 0 6px; border: 2px solid #e0e0e0; border-radius: 6px; background: #f2f2f2; color: #4a4a4a; font: bold 15.500px "Liberation Sans", Arial, sans-serif; letter-spacing: -.6px; }
.design .caret { margin-left: 9px; vertical-align: 2px; }
.ribbon-main { width: 1722px; }
.tabs { height: 34px; display: grid; grid-template-columns: 100px 158px 152px 138px 100px; letter-spacing: -.65px; text-align: center; line-height: 35px; }
.tabs .active { position: relative; left: 12px; top: 1px; height: 37px; background: #cbeaf6; border-bottom: 5px solid #0f99da; color: #1697d8; font-weight: bold; line-height: 33px; letter-spacing: -.35px; }
.groups { display: flex; height: 89px; }
.group { display: flex; flex-direction: column; align-items: center; position: relative; }
.icons { display: flex; height: 62px; }
.icons svg { width: 64.500px; height: 62px; }
.label { height: 27px; line-height: 27px; letter-spacing: -.6px; white-space: nowrap; }
.g { fill: none; stroke: #6b6b6b; stroke-width: 1.700; }
.bl { fill: none; stroke: #2a90e2; stroke-width: 1.900; }
.b { fill: #1b8be8; }
.r { fill: none; stroke: #d23a3a; stroke-width: 1.800; }
.create { width: 387px; }
.create .label { margin-right: 5px; }
.modify { width: 193.500px; margin-left: 15px; }
.modify .label { margin-right: 5px; }
.constraints { width: 580.500px; margin-left: 16.500px; }
.constraints .label { margin-right: 10px; }
.inspect { width: 80px; margin-left: 27px; }
.inspect .label { margin-right: 1px; }
.insert { width: 80px; margin-left: 30px; }
.insert .label { margin-left: 4px; }
.select { width: 80px; margin-left: 30px; }
.finish { width: 154px; margin-left: 20px; background: #cbeaf6; }
/* vertical rules between ribbon groups */
.modify::before, .constraints::before, .inspect::before, .insert::before, .select::before { content: ""; position: absolute; left: -10px; top: 6px; width: 2px; height: 77px; background: #dedede; }
.inspect::before { left: -21px; }
.insert::before { left: -12px; }
.select::before { left: -18px; }

.canvas { height: 743px; flex: none; position: relative; border-bottom: 3px solid #cdcdcd; background: #fff; }
.panel-head { position: absolute; left: 6px; width: 450px; height: 37px; display: flex; align-items: center; border: 1.500px solid #c3c3c3; background: #f1f1f1; color: #6b6b6b; letter-spacing: -.4px; }
.panel-head .knob { margin-left: auto; margin-right: 2px; }
.browser { position: absolute; left: 0; top: 6px; width: 456px; }
.browser-head { padding-left: 6px; gap: 14px; padding-bottom: 1px; }
.comments { top: 697px; padding-left: 36px; padding-bottom: 1px; border-top: 0; }
.tree { padding-top: 45px; display: flex; flex-direction: column; gap: 6.500px; font-size: 16px; }
.row { display: flex; align-items: center; height: 29.500px; }
.row span { padding-top: 2px; }
.r1 { padding-left: 31px; gap: 11px; }
.r2 { padding-left: 59px; }
.r2 > svg { width: 17px; margin-right: 11px; }
.r3 { padding-left: 114px; }
.cell { height: 29px; display: flex; align-items: center; background: #f1f1f1; position: relative; white-space: nowrap; padding-left: 4px; letter-spacing: -.1px; }
.root { width: 222px; gap: 8px; padding-left: 5px; }
.row .chip { width: 147px; height: 24px; display: flex; align-items: center; gap: 20px; padding: 0 0 0 4px; background: #979797; color: #fff; }
.radio { margin-left: -3px; }
.w1 { width: 201px; gap: 21px; }
.w2 { width: 165px; gap: 20px; }
.w2 span { letter-spacing: .1px; }
.w3 { width: 142px; gap: 14px; }
.w4 { width: 172px; gap: 14px; }
.w5 { width: 160px; gap: 14px; }
.w3 span, .w4 span, .w5 span { margin-left: 6px; }
.w4 span { letter-spacing: .1px; }
.hatch { position: absolute; right: 3px; bottom: 2px; width: 132px; height: 6px; background: repeating-linear-gradient(120deg, #7389ad 0 3px, transparent 3.500px 7.800px); }
.w5 .hatch { right: 0; width: 122px; }
.sliver { position: absolute; left: 174px; top: 76px; }

.cube { position: absolute; left: 1815px; top: 26px; width: 80px; height: 90px; }
.cube span { position: absolute; }
.top { left: 27px; top: 33px; font-size: 14px; font-weight: bold; color: #a3a3aa; letter-spacing: -2px; }
.ax { font-size: 13px; font-weight: bold; line-height: 14px; }
.x { left: 69px; top: 12px; color: #ff8585; }
.y { left: 4px; top: 4px; color: #96f596; }
.z { left: 11px; top: 69px; color: #8c8cff; font-size: 14px; }
.palette { position: absolute; left: 1881px; top: 130px; width: 33px; height: 263px; padding: 12px 2px 0 0; display: flex; flex-direction: column; align-items: center; gap: 7px; background: #f0f0f0; }
.palette span { writing-mode: vertical-rl; letter-spacing: -.75px; }
.navbar { position: absolute; left: 770px; top: 697px; width: 380px; background: #f1f1f1; }

.timeline { height: 71px; flex: none; background: #f1f1f1; display: flex; align-items: center; justify-content: space-between; padding-right: 20px; }

.taskbar { height: 60px; flex: none; display: flex; align-items: center; background: #1b1b1b; color: #fff; font-family: "Open Sans", "Noto Sans", sans-serif; }
.start { width: 72px; padding-left: 24px; }
.search { width: 516px; height: 60px; display: flex; align-items: center; gap: 15px; padding-left: 16px; border: 2px solid #5c5c5c; background: #323232; color: #d8d8d8; font-size: 21.500px; }
.search span { padding-top: 2px; }
.apps { display: flex; padding-left: 1px; }
.app { width: 75.200px; height: 60px; display: flex; align-items: center; justify-content: center; }
.app:first-child { width: 74px; padding-right: 4px; }
.current { width: 73px; background: #484848; border-bottom: 3px solid #ff8f98; padding-top: 3px; }
.tray-icons { margin-left: auto; }
.lang { width: 34px; margin-left: 20px; font-size: 17px; letter-spacing: -.3px; }
.clock { width: 96px; margin-left: 20px; display: flex; flex-direction: column; align-items: center; font-size: 17px; line-height: 28px; letter-spacing: .1px; }
.notify { margin: 4px 30px 0 26px; }
.peek { width: 7px; height: 60px; border-left: 1px solid #777; }
```
